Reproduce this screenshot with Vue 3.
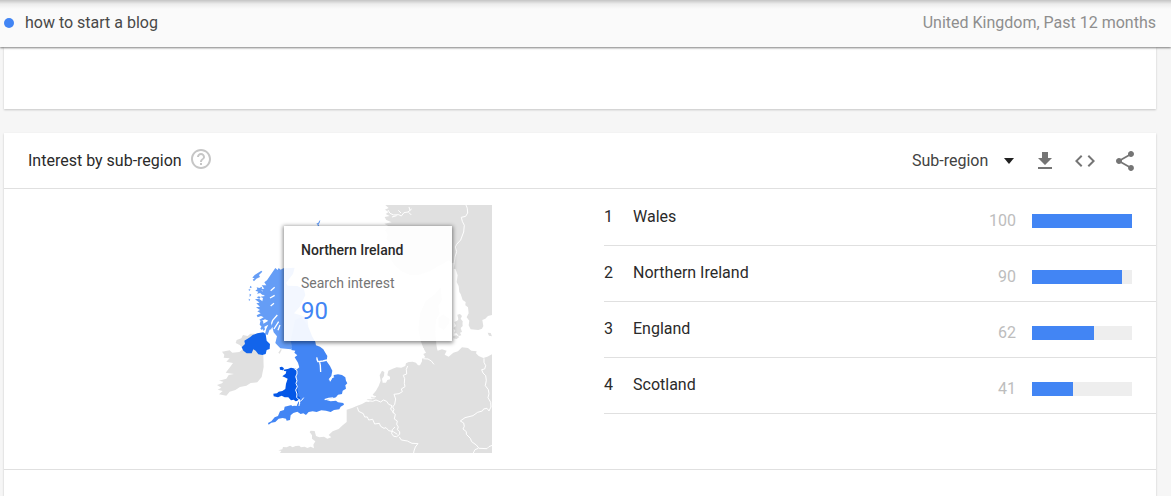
<script setup>
import { ref } from 'vue'

const resolution = ref('Sub-region')
const regions = [
  { name: 'Wales', value: 100 },
  { name: 'Northern Ireland', value: 90 },
  { name: 'England', value: 62 },
  { name: 'Scotland', value: 41 },
]
</script>

<template>
  <div class="page">
    <header class="topbar">
      <div class="term"><span class="dot"></span>how to start a blog</div>
      <div class="scope">United Kingdom, Past 12 months</div>
    </header>

    <main class="content">
      <section class="card card-previous"></section>

      <section class="card card-region">
        <div class="card-head">
          <h2>Interest by sub-region</h2>
          <button class="icon-button help" type="button" aria-label="Help">
            <svg width="24" height="24" viewBox="0 0 24 24"><path d="M11 18h2v-2h-2v2zm1-16C6.480 2 2 6.480 2 12s4.480 10 10 10 10-4.480 10-10S17.520 2 12 2zm0 18c-4.410 0-8-3.590-8-8s3.590-8 8-8 8 3.590 8 8-3.590 8-8 8zm0-14c-2.210 0-4 1.790-4 4h2c0-1.100.9-2 2-2s2 .9 2 2c0 2-3 1.750-3 5h2c0-2.250 3-2.500 3-5 0-2.210-1.790-4-4-4z" /></svg>
          </button>
          <div class="tools">
            <div class="picker">
              <select v-model="resolution" aria-label="Map resolution">
                <option>Sub-region</option>
                <option>City</option>
              </select>
              <svg class="caret" width="10" height="6" viewBox="0 0 10 6"><path d="M0 0h10L5 6z" /></svg>
            </div>
            <button class="icon-button" type="button" aria-label="Download">
              <svg width="24" height="24" viewBox="0 0 24 24"><path d="M19 9h-4V3H9v6H5l7 7 7-7zM5 18v2h14v-2H5z" /></svg>
            </button>
            <button class="icon-button" type="button" aria-label="Embed">
              <svg width="24" height="24" viewBox="0 0 24 24"><path d="M9.400 16.600 4.800 12l4.600-4.600L8 6l-6 6 6 6 1.400-1.400zm5.200 0 4.600-4.600-4.600-4.600L16 6l6 6-6 6-1.400-1.400z" /></svg>
            </button>
            <button class="icon-button" type="button" aria-label="Share">
              <svg width="24" height="24" viewBox="0 0 24 24"><path d="M18 16.080c-.76 0-1.440.3-1.960.77L8.910 12.700c.05-.23.09-.46.09-.7s-.04-.47-.09-.7l7.050-4.110c.54.5 1.250.81 2.040.81 1.660 0 3-1.340 3-3s-1.340-3-3-3-3 1.340-3 3c0 .24.04.47.09.7L8.040 9.810C7.500 9.310 6.790 9 6 9c-1.660 0-3 1.340-3 3s1.340 3 3 3c.79 0 1.500-.31 2.040-.81l7.120 4.160c-.05.21-.08.43-.08.65 0 1.610 1.310 2.920 2.920 2.920s2.920-1.310 2.920-2.920-1.310-2.920-2.920-2.920z" /></svg>
            </button>
          </div>
        </div>

        <div class="card-body">
          <div class="map-column">
            <div class="map">
              <svg width="376" height="248" viewBox="116 205 376 248" role="img" aria-label="Map of search interest in the United Kingdom">
                <!-- Norway and Sweden -->
                <g transform="translate(340 200) scale(.3333)">
                  <path class="land" d="M136 15H456V345L444 348 436 356 427 360 430 378 426 386 415 390 392 388 386 376 388 362 380 352 386 340 384 322 376 316 377 306 368 300 362 282 358 276 356 258 350 246 353 226 347 208 341 206 345 186 336 190 325 181 312 190 292 200 270 214 236 225 212 226 184 214 164 196 152 178 146 150 150 130 139 117 143 103 135 91 146 79 133 71 155 67 139 60 134 51 149 48 137 42 146 36 135 29 146 24z" />
                  <path class="land" d="M352 344l8-2 6 6-4 8 6 8-4 14-8-2-6-10 5-8z" />
                  <path class="border" d="M378 15l4 10 1 14-6 10-13 3 3 12 6 12-2 20-9 24-12 13-4 8 4 14-5 16-2 15" />
                  <path class="border" d="M144 30l6 10 11 5 15-1 8 4 8-10 12-2 11-9m-9 10 8 8m-31-6-8-8m-5 16-14 4m54-20-3-10" />
                </g>
                <!-- Denmark -->
                <g transform="translate(340 320) scale(.3333)">
                  <path class="land" d="M250 84 242 62 235 28 240-20 257-56 285-78 302-98 306-60 295-42 299-20 288 0 286 35 288 60 290 84z" />
                  <path class="land" d="M295-5l14-12 20 14-2 13-15 20-16-8zM343 6l14-6 10 4 1 14-6 6 4 12-6 2 4 8-8 2-6-8-8 0 4-8-6-8 8-6zM340 48l10-2 8 5-8 6-10-2zM443 38l9 1 4 10-9-2z" />
                </g>
                <!-- Mainland Europe -->
                <g transform="translate(340 320) scale(.3333)">
                  <path class="land" d="M456 399H-180L-176 393-185 391-173 388-171 381-160 382-150 377-142 382-133 378-122 377-117 382-106 380-98 384-88 380-78 385-80 374-74 364-84 356-84 346-91 336-88 332-76 333-72 348-62 352-48 350-38 356-26 352-34 345-22 334-4 327 8 316 20 306V269L36 264 50 258 66 252 78 245 90 246 80 238 96 238 92 230 106 232 98 224 108 212 116 198 122 182 119 166 126 152 133 156 132 168 126 176 128 188 138 188 142 180 150 178 150 170 142 166 145 152 158 146 170 142 184 143 196 138 198 130 206 126 218 125 228 128 234 136 240 136 246 124 246 116 256 112 250 102 258 98 252 88 250 76H288L293 92 306 88 320 92 314 104 326 110 340 98 354 94 366 82 384 84 394 92 410 94 408 100 416 108 430 114 442 110 456 103z" />
                  <path class="border" d="M203 138l-4 10 1 14-10 4 4 10-1 14 2 10-11 7 3 8-10 6-15 2 5 14-3 16-6 8 4 8-4 8 8 6-3 14 9 6-2 10 5 8-3 8 7 6 0 8-9 7-9-1-6-8 2-12 8-8m13 30 6 9 18 3 14 7 18 1-8 10-4 12-3 16" />
                  <path class="border" d="M52 262l4 12 14 7 4 10 8 0 4 9 12-2 6 14 14-2 4 9 10 6 6-2 8 9 14 3 12 8M84 242l14 2 10-4 14 6 8-6 10 4 6 9 10 4-4 10 10 12M80 236l24-2m-16-8 20 4m142-114 14 1 10 6 8 10M432 115l0 12 5 10-3 10-9 2 4 10 8 8 2 14-3 16 9 12 2 12-3 12 8 14 1 14-6 12-6-8-10 2-4 6-14 4-14 10-24 6-14 10 10 6 2 10-4 8 10 8 0 8 12 12 4 10 14 10 8 10 24 1 6-6 12-5M415 385l-10 4-5 10" />
                </g>
                <!-- Ireland -->
                <g transform="translate(200 320) scale(.3333)">
                  <path class="land" d="M66 95l23-4 8 7 21-2 12-10-11-11-12-6 3-9 14-5 5-10 14 3 8-7 14 0-9 11 16 12 18 42 1 35-6 30-13 16-20 2-13 8-19 4-14 9-17 5-10 12-22-4 11-10-15-4 11-6-13-8 15-5 4-5-13-3 22-6 7-11 16-3-25-4 15-19 7-10-20-4 10-10-18-2 2-9z" />
                  <path class="north" d="M125 82l10-10-2-10 17-10 8-7 14-5 18-3 7 5 3 20 10 10-1 15-9 3-3 12-10 3-12-2-8-11-7-4-5 12h-15l-10-8z" />
                  <path class="land" d="M235 98l8-12 2 3-6 12z" />
                </g>
                <!-- Scotland -->
                <g transform="translate(200 200) scale(.3333)">
                  <path class="scotland" d="M226 204l7 6 3-6 6 5 8-4 34-2-5 19-21 27 5 8 29 1 20 9 4 19-17 35-17 19 18 5 22 8 3 25-8 24-44 46-32-3-15-16 5-20-10-12-4-16-9 10-5 14-8-3 4-16 6-12-12 6-7 10-5-4 8-14 16-10-10-4-12 6-5-5 13-7-8-4-10 4-3-6 12-6-10-6 8-4-12-8 12-2-11-10 10-2-14-10 12-2 10 8 2-10-8-4 14-2-14-9 8-6-10-6 14-1-8-10 14 0-6-9 8-6z" />
                  <path class="scotland" d="M164 225l20-13 3 3-10 10 3 6-11 5-7 8-4-5 6-4-7-2zM170 262l8 2 8-4-1 12 7 8-5 5-6-6-10 2 4-6-9-3 6-4zM151 257l5 5-7 3zM146 267l6 2-5 4zM149 281l5 3-5 7zM170 292l7-3 5 3-4 4zM146 296l5 3-4 4zM176 300l8 2-4 6zM355 68l3-6 3-1-2 7-4 6 3 1-2 6-3-2 0-5-4-3z" />
                  <path class="water" d="M232 345l-14 16-6 18m24-14-14 22m18-12-6 16M224 262l-12 10m12 14-14 8m12 16-10 8" />
                  <path class="scotland" d="M181 364l8-2 2 12 4 14-4 5-5-12-7-7zM207 368l5-2 4 12-3 12-7-9z" />
                </g>
                <!-- England and Wales -->
                <g transform="translate(200 320) scale(.3333)">
                  <path class="england" d="M272 62L285 0 305-10 325 20 337 50 346 65 348 76 360 80 370 88 376 98 382 108 380 124 390 138 397 152 394 168 386 178 392 182 398 172 402 165 414 163 426 165 436 172 438 182 442 190 436 196 438 206 428 212 426 222 414 224 408 232 394 236 376 239 392 244 408 242 414 247 430 249 432 254 422 260 418 268 402 270 392 276 378 272 364 271 350 276 338 274 326 276 318 285 310 280 302 282 292 275 280 279 272 286 270 300 260 302 258 296 248 294 236 296 226 306 214 308 206 314 204 309 214 304 224 292 234 288 240 274 252 270 254 260 272 256 290 258 294 246 300 240 292 220 288 150 298 142 294 128 284 112 292 106 283 98 286 92 274 90 276 78z" />
                  <path class="wales" d="M250 149l13-2 10-4 14 3 5 10-4 14 3 15 1 20 2 11 2 13 5 5-6 8-8 2-6-5-8 2-8-9-11 0-9-5-11 5-13-3-1-8 11-1 5-5 11-2 9-6 2-16 5-15-9-4-7-3 10-8 2-7-6-1zM239 142l7-2 6 5-3 6-9-2z" />
                  <path class="border" d="M283 146l8 6 0 10-4 8 4 12-3 8 4 10-5 10 4 12-1 10 8 8 1 12m0-4-2 10m0-12 8-5 6-8" />
                  <path class="water" d="M350 118l5 7 14-2 12-3m-22 6 2 10 1 20m-12-44 4 14m48 44-8 4-4 10m-16 55 12-4 14-1M276 257l14-7 6-10" />
                </g>
              </svg>
              <div class="tooltip">
                <strong>Northern Ireland</strong>
                <span class="tooltip-label">Search interest</span>
                <span class="tooltip-value">90</span>
              </div>
            </div>
          </div>

          <ol class="ranking">
            <li v-for="(region, index) in regions" :key="region.name">
              <span class="rank">{{ index + 1 }}</span>
              <span class="name">{{ region.name }}</span>
              <span class="score">
                <span>{{ region.value }}</span>
                <span class="track"><span class="fill" :style="{ width: region.value + '%' }"></span></span>
              </span>
            </li>
          </ol>
        </div>
      </section>
    </main>
  </div>
</template>

<style>
body {
  margin: 0;
  background: #f6f6f6;
}
</style>

<style scoped>
.page {
  display: flex;
  flex-direction: column;
  height: 100vh;
  overflow: hidden;
  color: #2a2a2a;
  font: 16px/24px Roboto, sans-serif;
}

.topbar {
  z-index: 1;
  flex: none;
  display: flex;
  align-items: center;
  justify-content: space-between;
  box-sizing: border-box;
  height: 47px;
  padding: 0 15px 2px 4px;
  background: linear-gradient(#c4c4c4, #ececec 4px, #fafafa 9px);
  box-shadow: 0 1px 2px rgba(0, 0, 0, 0.5);
}

.term {
  display: flex;
  align-items: center;
  gap: 11px;
  color: #484848;
}

.dot {
  width: 10px;
  height: 10px;
  border-radius: 50%;
  background: #4285f4;
}

.scope {
  color: #8e8e8e;
}

.content {
  flex: 1;
  display: flex;
  flex-direction: column;
  gap: 24px;
  padding: 0 15px 0 4px;
}

.card {
  background: #fff;
  box-shadow: 0 1px 2px rgba(0, 0, 0, 0.2);
}

.card-previous {
  height: 62px;
}

.card-region {
  flex: 1;
}

.card-head {
  display: flex;
  align-items: center;
  height: 55px;
  padding: 0 19px 0 24px;
  border-bottom: 1px solid #e0e0e0;
}

h2 {
  margin: 0;
  font-size: 16px;
  font-weight: 400;
}

.icon-button {
  display: flex;
  padding: 0;
  border: 0;
  background: none;
  fill: #757575;
}

.help {
  margin: 0 0 3px 7px;
  fill: #c6c6c6;
}

.tools {
  display: flex;
  align-items: center;
  gap: 16px;
  margin-left: auto;
}

.picker {
  display: grid;
  align-items: center;
}

.picker > * {
  grid-area: 1 / 1;
}

select {
  appearance: none;
  width: 105px;
  padding: 0;
  border: 0;
  background: none;
  color: #424242;
  font: inherit;
}

.caret {
  justify-self: end;
  margin-right: 3px;
  pointer-events: none;
  fill: #212121;
}

.card-body {
  display: grid;
  grid-template-columns: 600fr 552fr;
  height: 280px;
  border-bottom: 1px solid #e0e0e0;
}

.map-column {
  display: flex;
  justify-content: center;
  padding-top: 16px;
}

.map {
  position: relative;
}

.map svg {
  display: block;
}

.land { fill: #e0e0e0; }
.north { fill: #1264eb; }
.scotland { fill: #659df6; }
.england { fill: #4285f4; }
.wales { fill: #0457e7; }

.border,
.water {
  fill: none;
  stroke: #fff;
  stroke-width: 4;
  stroke-linejoin: round;
}

.border {
  stroke-width: 3;
}

.tooltip {
  position: absolute;
  top: 21px;
  left: 168px;
  display: flex;
  flex-direction: column;
  box-sizing: border-box;
  width: 168px;
  padding: 12px 17px 16px;
  background: rgba(255, 255, 255, 0.92);
  box-shadow: 0 1px 4px 1px rgba(0, 0, 0, 0.45);
  font-size: 14px;
}

.tooltip strong {
  font-weight: 500;
}

.tooltip-label {
  margin-top: 9px;
  color: #757575;
}

.tooltip-value {
  margin-top: 2px;
  color: #4285f4;
  font-size: 24px;
  line-height: 28px;
}

.ranking {
  margin: 0;
  padding: 1px 0 0;
  list-style: none;
}

.ranking li {
  display: flex;
  align-items: center;
  box-sizing: border-box;
  height: 56px;
  padding-right: 24px;
  border-bottom: 1px solid #e0e0e0;
}

.rank,
.name {
  padding-bottom: 2px;
}

.rank {
  width: 29px;
}

.score {
  display: flex;
  align-items: center;
  gap: 16px;
  margin-left: auto;
  padding-top: 6px;
  color: #bdbdbd;
}

.track {
  width: 100px;
  height: 14px;
  background: #eee;
}

.fill {
  display: block;
  height: 100%;
  background: #4285f4;
}
</style>
